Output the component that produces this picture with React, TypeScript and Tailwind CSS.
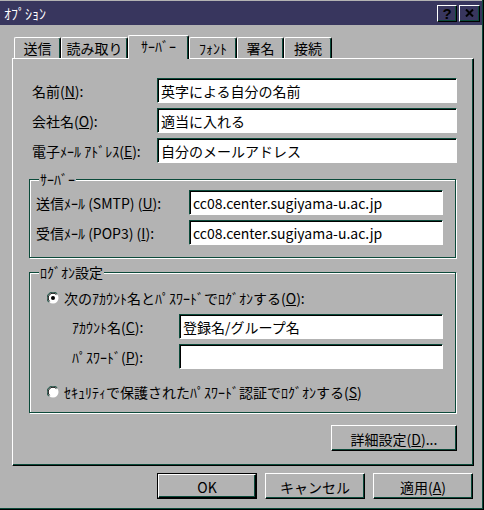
import type { ReactNode } from 'react';

const face = 'bg-[#b3b3b3]';

function Field({ value, w }: { value?: string; w: string }) {
  return (
    <div
      className={`${w} h-[25px] bg-white border border-t-[#0b4a3a] border-l-[#0b4a3a] border-r-white border-b-white shadow-[inset_1px_1px_0_#000] flex items-center pl-[3px] pt-px whitespace-nowrap`}
    >
      {value}
    </div>
  );
}

function Label({ children }: { children: ReactNode }) {
  return <div className="h-[25px] flex items-center whitespace-nowrap">{children}</div>;
}

function Button({ children, w, def }: { children: ReactNode; w: string; def?: boolean }) {
  return (
    <div className={`${w} ${def ? 'border border-black' : ''} h-[26px] flex`}>
      <div className="flex-1 flex items-center justify-center border border-t-white border-l-white border-r-black border-b-black shadow-[inset_-1px_-1px_0_#0b4a3a] pt-px">
        {children}
      </div>
    </div>
  );
}

function Radio({ checked }: { checked?: boolean }) {
  return (
    <svg width="12" height="12" viewBox="0 0 12 12" className="shrink-0">
      <circle cx="6" cy="6" r="5.5" fill="#fff" />
      <path d="M1.75 10.25 A6 6 0 0 1 10.25 1.75" stroke="#0b4a3a" strokeWidth="1" fill="none" />
      <path d="M2.6 9.4 A4.8 4.8 0 0 1 9.4 2.6" stroke="#000" strokeWidth="1" fill="none" />
      {checked && <circle cx="6" cy="6" r="2" fill="#000" />}
    </svg>
  );
}

function Group({ title, h, children }: { title: string; h: string; children: ReactNode }) {
  return (
    <div className={`relative w-[427px] ${h} border border-[#0b4a3a] shadow-[1px_1px_0_#fff,inset_1px_1px_0_#fff]`}>
      <span className={`absolute -top-[9px] left-[9px] px-px ${face} leading-[16px]`}>{title}</span>
      {children}
    </div>
  );
}

const tabs = [
  { label: '送信', w: 'w-[47px]' },
  { label: '読み取り', w: 'w-[67px]' },
  { label: 'ｻｰﾊﾞｰ', w: 'w-[61px]', active: true },
  { label: 'ﾌｫﾝﾄ', w: 'w-[48px]' },
  { label: '署名', w: 'w-[47px]' },
  { label: '接続', w: 'w-[48px]' },
];

export default function App() {
  return (
    <div
      className={`w-[484px] h-[510px] ${face} border-r border-b border-r-black border-b-black shadow-[inset_-1px_-1px_0_#0b4a3a] pt-px pr-px text-[14px] leading-none text-black font-['Noto_Sans_CJK_JP',sans-serif] overflow-hidden`}
    >
      {/* Title bar */}
      <div className="h-[24px] bg-[#38365e] flex items-center justify-between pl-[4px] pr-[2px]">
        <span className="text-white text-[14px]">ｵﾌﾟｼｮﾝ</span>
        <div className="flex gap-[2px]">
          <div className="w-[20px] h-[17px] flex items-center justify-center border border-t-white border-l-white border-r-black border-b-black shadow-[inset_-1px_-1px_0_#0b4a3a] font-['Liberation_Sans',sans-serif] font-bold text-[15px]">
            ?
          </div>
          <div className="w-[21px] h-[17px] flex items-center justify-center border border-t-white border-l-white border-r-black border-b-black shadow-[inset_-1px_-1px_0_#0b4a3a]">
            <svg width="9" height="8" viewBox="0 0 9 8">
              <path d="M1 0.5 L8 7.5 M8 0.5 L1 7.5" stroke="#000" strokeWidth="2" />
            </svg>
          </div>
        </div>
      </div>

      <div className="pl-[12px]">
        {/* Tabs */}
        <div className="relative z-10 mt-[10px] h-[23px] flex items-end pl-[2px]">
          {tabs.map((t) =>
            t.active ? (
              <div
                key={t.label}
                className={`${t.w} h-[24px] -mb-px ${face} flex items-center justify-center border-t border-l border-white border-r border-r-black rounded-t-[2px] shadow-[inset_-1px_0_0_#0b4a3a] pb-[3px]`}
              >
                {t.label}
              </div>
            ) : (
              <div
                key={t.label}
                className={`${t.w} h-[21px] flex items-center justify-center border-t border-l border-white border-r border-r-black rounded-t-[2px] shadow-[inset_-1px_0_0_#0b4a3a]`}
              >
                {t.label}
              </div>
            )
          )}
        </div>

        {/* Panel */}
        <div className="w-[462px] h-[408px] border-t border-l border-white border-r border-b border-r-black border-b-black shadow-[inset_-1px_-1px_0_#0b4a3a] pt-[19px] pl-[16px]">
          <div className="ml-[3px] grid grid-cols-[125px_300px] gap-y-[5px]">
            <Label>
              名前(<u>N</u>):
            </Label>
            <Field w="w-[300px]" value="英字による自分の名前" />
            <Label>
              会社名(<u>O</u>):
            </Label>
            <Field w="w-[300px]" value="適当に入れる" />
            <Label>
              電子ﾒｰﾙ ｱﾄﾞﾚｽ(<u>E</u>):
            </Label>
            <Field w="w-[300px]" value="自分のメールアドレス" />
          </div>

          <div className="mt-[16px]">
            <Group title="ｻｰﾊﾞｰ" h="h-[79px]">
              <div className="pt-[10px] pl-[6px] grid grid-cols-[153px_254px] gap-y-[5px]">
                <Label>
                  送信ﾒｰﾙ (SMTP) (<u>U</u>):
                </Label>
                <Field w="w-[254px]" value="cc08.center.sugiyama-u.ac.jp" />
                <Label>
                  受信ﾒｰﾙ (POP3) (<u>I</u>):
                </Label>
                <Field w="w-[254px]" value="cc08.center.sugiyama-u.ac.jp" />
              </div>
            </Group>
          </div>

          <div className="mt-[14px]">
            <Group title="ﾛｸﾞｵﾝ設定" h="h-[141px]">
              <div className="pt-[15px] pl-[17px]">
                <div className="h-[20px] flex items-center gap-[5px]">
                  <Radio checked />
                  <span>
                    次のｱｶｳﾝﾄ名とﾊﾟｽﾜｰﾄﾞでﾛｸﾞｵﾝする(<u>O</u>):
                  </span>
                </div>
                <div className="mt-[6px] ml-[25px] grid grid-cols-[107px_264px] gap-y-[5px]">
                  <Label>
                    ｱｶｳﾝﾄ名(<u>C</u>):
                  </Label>
                  <Field w="w-[264px]" value="登録名/グループ名" />
                  <Label>
                    ﾊﾟｽﾜｰﾄﾞ(<u>P</u>):
                  </Label>
                  <Field w="w-[264px]" />
                </div>
                <div className="mt-[13px] h-[20px] flex items-center gap-[5px]">
                  <Radio />
                  <span>
                    ｾｷｭﾘﾃｨで保護されたﾊﾟｽﾜｰﾄﾞ認証でﾛｸﾞｵﾝする(<u>S</u>)
                  </span>
                </div>
              </div>
            </Group>
          </div>

          <div className="w-[428px] mt-[12px] flex justify-end">
            <Button w="w-[126px]">
              詳細設定(<u>D</u>)...
            </Button>
          </div>
        </div>

        {/* Dialog buttons */}
        <div className="w-[462px] mt-[7px] pr-px flex justify-end gap-[8px]">
          <Button w="w-[100px]" def>
            OK
          </Button>
          <Button w="w-[100px]">キャンセル</Button>
          <Button w="w-[100px]">
            適用(<u>A</u>)
          </Button>
        </div>
      </div>
    </div>
  );
}
